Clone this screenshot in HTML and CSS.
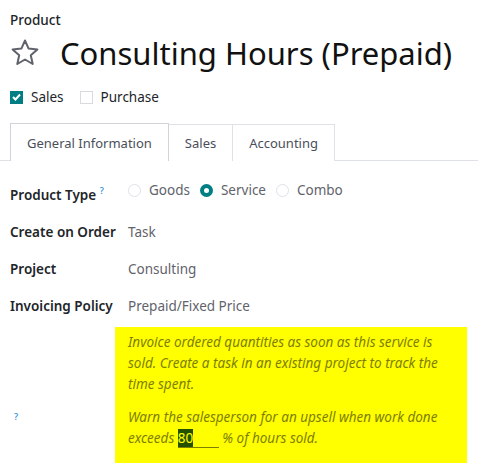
FILE: index.html
```html
<!DOCTYPE html>
<html lang="en">

<head>
  <meta charset="UTF-8">
  <meta name="viewport" content="width=device-width, initial-scale=1.0">
  <title>Consulting Hours (Prepaid)</title>
  <link rel="stylesheet" href="styles.css">
</head>

<body>
  <div class="sheet">
    <div class="title-label">Product</div>
    <h1 class="title">
      <svg class="star" width="30" height="30" viewBox="0 0 30 30">
        <path d="M15 2.5 L18.6 10.6 L27.4 11.4 L20.8 17.3 L22.7 26 L15 21.5 L7.3 26 L9.2 17.3 L2.6 11.4 L11.4 10.6 Z" fill="none" stroke="#5f636b" stroke-width="2" stroke-linejoin="round"/>
      </svg>
      <span>Consulting Hours (Prepaid)</span>
    </h1>

    <div class="options">
      <label class="check"><span class="box checked"><svg width="9" height="8" viewBox="0 0 9 8"><path d="M1 4 L3.5 6.5 L8 1.5" fill="none" stroke="#fff" stroke-width="2"/></svg></span>Sales</label>
      <label class="check"><span class="box"></span>Purchase</label>
    </div>

    <div class="tabs">
      <div class="tab active">General Information</div>
      <div class="tab">Sales</div>
      <div class="tab">Accounting</div>
    </div>

    <div class="form">
      <div class="lbl">Product Type <sup class="help">?</sup></div>
      <div class="val radios">
        <label class="radio"><span class="dot"></span>Goods</label>
        <label class="radio"><span class="dot on"></span>Service</label>
        <label class="radio"><span class="dot"></span>Combo</label>
      </div>

      <div class="lbl">Create on Order</div>
      <div class="val">Task</div>

      <div class="lbl">Project</div>
      <div class="val">Consulting</div>

      <div class="lbl">Invoicing Policy</div>
      <div class="val">Prepaid/Fixed Price</div>

      <div class="lbl lbl-note"><sup class="help">?</sup></div>
      <div class="note">
        <p>Invoice ordered quantities as soon as this service is sold. Create a task in an existing project to track the time spent.</p>
        <p>Warn the salesperson for an upsell when work done exceeds <span class="pct"><span class="sel">80</span></span> % of hours sold.</p>
      </div>
    </div>
  </div>
</body>

</html>
```

FILE: styles.css
```css
body {
  margin: 0;
  font-family: "Noto Sans", "Open Sans", sans-serif;
  color: #212529;
  background: #fff;
}

.sheet {
  padding: 10px 0 0 0;
}

.title-label {
  font-size: 13.5px;
  font-weight: 500;
  padding-left: 10px;
  line-height: 20px;
}

.title {
  margin: 3px 0 0 0;
  display: flex;
  align-items: center;
  gap: 20px;
  padding-left: 10px;
  font-size: 31px;
  font-weight: 400;
  line-height: 40px;
  color: #111;
}

.star {
  display: block;
}

.options {
  display: flex;
  gap: 16px;
  padding: 15px 0 0 10px;
  font-size: 13.5px;
}

.check {
  display: flex;
  align-items: center;
  gap: 8px;
}

.box {
  width: 13px;
  height: 13px;
  border: 1px solid #d8dadd;
  box-sizing: border-box;
  display: flex;
  align-items: center;
  justify-content: center;
}

.box.checked {
  background: #017e84;
  border-color: #017e84;
}

.tabs {
  display: flex;
  margin-top: 17px;
  padding-left: 10px;
  border-bottom: 1px solid #dee2e6;
  height: 37px;
}

.tab {
  font-size: 13px;
  color: #4a4f59;
  padding: 0 16px;
  display: flex;
  align-items: center;
  border: 1px solid #dee2e6;
  border-bottom: none;
  margin-bottom: -1px;
  margin-top: 1px;
  background: #fff;
}

.tab + .tab {
  border-left: none;
}

.tab.active {
  margin-top: 0;
  border-color: #d0d3d7;
  height: 38px;
  box-sizing: border-box;
}

.form {
  display: grid;
  grid-template-columns: 105px 1fr;
  padding: 19px 11px 0 10px;
  font-size: 13.5px;
  row-gap: 16px;
}

.lbl {
  font-weight: 600;
  line-height: 21px;
  white-space: nowrap;
}

.val {
  color: #5f636b;
  padding-left: 13px;
  line-height: 21px;
  white-space: nowrap;
}

.help {
  color: #1b8dd6;
  font-size: 9px;
  font-weight: 500;
}

.radios {
  display: flex;
  gap: 10px;
  margin-bottom: 4px;
}

.radio {
  display: flex;
  align-items: center;
  gap: 8px;
}

.dot {
  width: 13px;
  height: 13px;
  border-radius: 50%;
  border: 1px solid #dee2e6;
  box-sizing: border-box;
}

.dot.on {
  border: 4px solid #017e84;
}

.lbl-note {
  display: flex;
  align-items: flex-end;
  padding: 0 0 36px 4px;
}

.note {
  background: #ffff00;
  color: #7e7e00;
  font-style: italic;
  padding: 5px 14px 14px 13px;
  line-height: 21px;
  margin-top: -6px;
}

.note p {
  margin: 0 0 12px 0;
}

.note p:last-child {
  margin-bottom: 0;
}

.pct {
  display: inline-block;
  width: 41px;
  border-bottom: 1px solid #7e7e00;
  line-height: 17px;
  font-style: normal;
}

.sel {
  background: #255000;
  color: #ffff00;
}
```
